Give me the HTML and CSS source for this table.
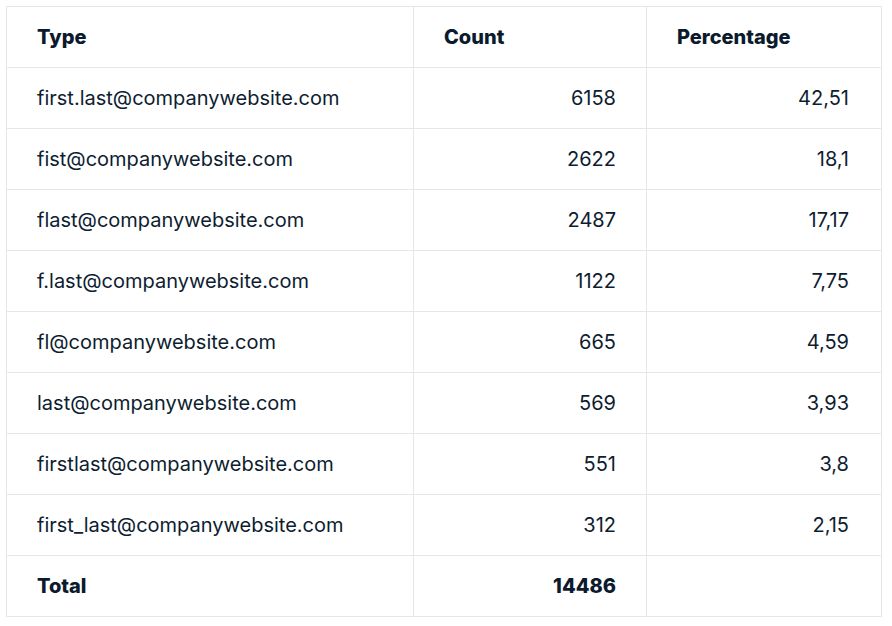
FILE: index.html
```html
<!DOCTYPE html>
<html>
<head>
<meta charset="utf-8">
<link rel="stylesheet" href="styles.css">
</head>
<body>
<table class="stats">
  <colgroup>
    <col class="c-type">
    <col class="c-count">
    <col class="c-pct">
  </colgroup>
  <thead>
    <tr><th>Type</th><th>Count</th><th>Percentage</th></tr>
  </thead>
  <tbody>
    <tr><td>first.last@companywebsite.com</td><td class="num">6158</td><td class="num">42,51</td></tr>
    <tr><td>fist@companywebsite.com</td><td class="num">2622</td><td class="num">18,1</td></tr>
    <tr><td>flast@companywebsite.com</td><td class="num">2487</td><td class="num">17,17</td></tr>
    <tr><td>f.last@companywebsite.com</td><td class="num">1122</td><td class="num">7,75</td></tr>
    <tr><td>fl@companywebsite.com</td><td class="num">665</td><td class="num">4,59</td></tr>
    <tr><td>last@companywebsite.com</td><td class="num">569</td><td class="num">3,93</td></tr>
    <tr><td>firstlast@companywebsite.com</td><td class="num">551</td><td class="num">3,8</td></tr>
    <tr><td>first_last@companywebsite.com</td><td class="num">312</td><td class="num">2,15</td></tr>
    <tr class="total"><td>Total</td><td class="num">14486</td><td></td></tr>
  </tbody>
</table>
</body>
</html>
```
FILE: styles.css
```css
html, body {
  margin: 0;
  background: #ffffff;
}
body {
  padding: 6px;
  font-family: Inter, "Noto Sans", sans-serif;
  color: #0e1d30;
}
.stats {
  border-collapse: collapse;
  width: 875px;
  table-layout: fixed;
}
.c-type { width: 407px; }
.c-count { width: 233px; }
.c-pct { width: 235px; }
.stats th,
.stats td {
  border: 1px solid #e6e6e6;
  height: 61px;
  padding: 0 30px;
  font-size: 20px;
  text-align: left;
  box-sizing: border-box;
}
.stats th:last-child,
.stats td:last-child {
  padding-right: 32px;
}
.stats th {
  font-weight: 800;
  color: #0b1a2c;
}
.stats td.num {
  text-align: right;
}
.stats tr.total td {
  font-weight: 800;
  color: #0b1a2c;
}
```
